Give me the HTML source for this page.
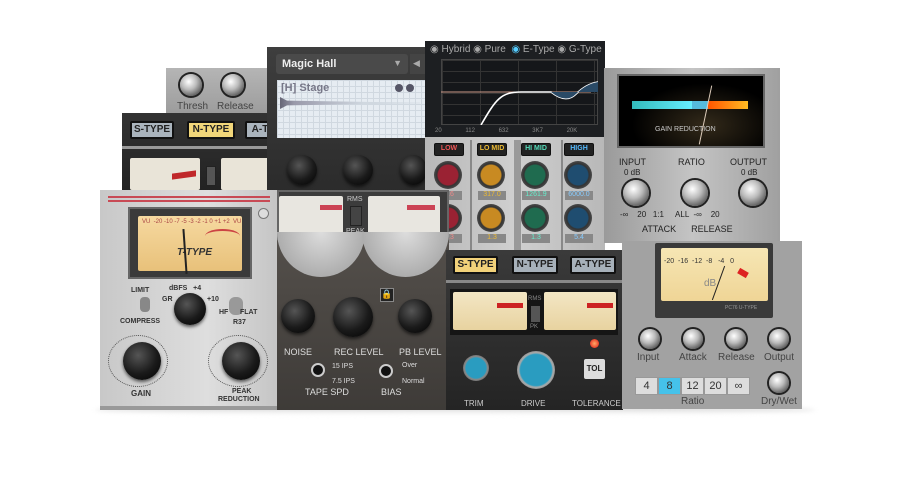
<!DOCTYPE html>
<html><head><meta charset="utf-8"><style>
*{margin:0;padding:0;box-sizing:border-box}
body{width:900px;height:500px;background:#fff;position:relative;overflow:hidden;font-family:"Liberation Sans",sans-serif}
.a{position:absolute}
.k{position:absolute;border-radius:50%}
.kb{background:radial-gradient(circle at 40% 35%,#555 0,#1a1a1a 55%,#000 100%);box-shadow:0 2px 3px rgba(0,0,0,.6)}
.ks{background:radial-gradient(circle at 40% 35%,#fff 0,#bbb 40%,#555 80%,#222 100%);box-shadow:0 0 0 2px #222}
.btn{position:absolute;font-size:10px;font-weight:bold;text-align:center;border:2px solid #111;border-radius:2px}
.lbl{position:absolute;font-size:9px;white-space:nowrap}
.vu{position:absolute;background:linear-gradient(#f3e6c4,#e8d3a0);border-radius:2px}
.ptr{position:absolute;width:2px;background:#111;transform-origin:bottom center}
</style></head><body>
<!-- shadow -->
<div class="a" style="left:95px;top:405px;width:720px;height:10px;background:linear-gradient(#ccc,#fff);border-radius:50%;filter:blur(2px)"></div>

<!-- back gray small panel -->
<div class="a" style="left:166px;top:68px;width:110px;height:46px;background:linear-gradient(#b5b5b5,#9c9c9c)"></div>
<div class="k ks" style="left:180px;top:74px;width:22px;height:22px"></div>
<div class="k ks" style="left:222px;top:74px;width:22px;height:22px"></div>
<div class="lbl" style="left:177px;top:101px;color:#444;font-size:10px">Thresh</div>
<div class="lbl" style="left:217px;top:101px;color:#444;font-size:10px">Release</div>

<!-- dark S-TYPE panel -->
<div class="a" style="left:122px;top:113px;width:150px;height:80px;background:linear-gradient(#333,#222)"></div>
<div class="btn" style="left:130px;top:121px;width:44px;height:18px;background:#aab4bd;color:#222;line-height:14px">S-TYPE</div>
<div class="btn" style="left:187px;top:121px;width:48px;height:18px;background:#f1d67a;color:#222;line-height:14px">N-TYPE</div>
<div class="btn" style="left:245px;top:121px;width:30px;height:18px;background:#aab4bd;color:#222;line-height:14px">A-T</div>
<div class="a" style="left:122px;top:146px;width:150px;height:3px;background:#999"></div>
<div class="vu" style="left:130px;top:158px;width:70px;height:32px;background:#e9e4d8"></div>
<div class="a" style="left:172px;top:172px;width:24px;height:6px;background:#c0282a;transform:skewY(-8deg)"></div>
<div class="a" style="left:206px;top:166px;width:10px;height:20px;background:#555;border:1px solid #222"></div>
<div class="vu" style="left:221px;top:158px;width:50px;height:32px;background:#e9e4d8"></div>

<!-- Magic Hall -->
<div class="a" style="left:267px;top:47px;width:160px;height:146px;background:linear-gradient(#3e3e3e,#2b2b2b)"></div>
<div class="a" style="left:276px;top:54px;width:132px;height:20px;background:#4a4a4a;border-radius:3px;color:#eee;font-size:11px;font-weight:bold;padding:4px 6px">Magic Hall<span style="float:right;color:#aaa;font-size:9px">▼</span></div>
<div class="a" style="left:410px;top:54px;width:17px;height:20px;background:#444;color:#aaa;font-size:9px;padding:4px 3px">◀</div>
<div class="a" style="left:277px;top:80px;width:150px;height:58px;background:linear-gradient(#e8eef5,#d2dbe5);background-image:linear-gradient(#d0d8e0 1px,transparent 1px),linear-gradient(90deg,#d0d8e0 1px,#e6ecf2 1px);background-size:6px 6px"></div>
<div class="lbl" style="left:281px;top:82px;color:#778;font-size:11px;font-weight:bold">[H] Stage</div>
<div class="a" style="left:395px;top:84px;width:8px;height:8px;border-radius:50%;background:#556"></div>
<div class="a" style="left:406px;top:84px;width:8px;height:8px;border-radius:50%;background:#556"></div>
<div class="a" style="left:280px;top:97px;width:140px;height:12px;background:linear-gradient(90deg,#667 0,#99a 10%,#d0d8e0 60%);clip-path:polygon(0 0,5% 30%,100% 48%,100% 52%,5% 70%,0 100%)"></div>
<div class="k kb" style="left:287px;top:155px;width:30px;height:30px"></div>
<div class="k kb" style="left:343px;top:155px;width:30px;height:30px"></div>
<div class="k kb" style="left:400px;top:155px;width:27px;height:30px"></div>

<!-- EQ -->
<div class="a" style="left:425px;top:41px;width:180px;height:98px;background:#1d1f22"></div>
<div class="lbl" style="left:430px;top:44px;color:#aaa;font-size:10px">◉ Hybrid ◉ Pure &nbsp;<span style="color:#5cf">◉</span> E-Type ◉ G-Type</div>
<div class="a" style="left:441px;top:59px;width:157px;height:66px;background:#15171a;background-image:linear-gradient(90deg,#333 1px,transparent 1px),linear-gradient(#333 1px,transparent 1px);background-size:38px 11px;border:1px solid #444"></div>
<svg class="a" style="left:441px;top:59px" width="157" height="66"><path d="M0 33 L150 33" stroke="#c98" stroke-width="1"/><path d="M40 66 C55 40 60 33 80 33 L110 33 Q125 45 135 35 Q145 25 157 23" stroke="#fff" stroke-width="1.6" fill="none"/><path d="M110 33 Q125 45 135 35 Q145 25 157 23 L157 33Z" fill="#2a4a66"/></svg>
<div class="lbl" style="left:435px;top:128px;color:#888;font-size:6px;word-spacing:22px">20 112 632 3K7 20K</div>
<div class="a" style="left:425px;top:137px;width:180px;height:113px;background:linear-gradient(90deg,#b8b8b8,#cfcfcf,#b8b8b8)"></div>
<div class="a" style="left:470px;top:140px;width:2px;height:110px;background:#888"></div>
<div class="a" style="left:514px;top:140px;width:7px;height:110px;background:#999"></div>
<div class="a" style="left:561px;top:140px;width:2px;height:110px;background:#888"></div>
<div class="btn" style="left:434px;top:143px;width:30px;height:13px;background:#222;color:#e55;font-size:7px;line-height:9px;border-width:1px">LOW</div>
<div class="btn" style="left:477px;top:143px;width:30px;height:13px;background:#222;color:#eb3;font-size:7px;line-height:9px;border-width:1px">LO MID</div>
<div class="btn" style="left:521px;top:143px;width:30px;height:13px;background:#222;color:#5db;font-size:7px;line-height:9px;border-width:1px">HI MID</div>
<div class="btn" style="left:564px;top:143px;width:30px;height:13px;background:#222;color:#5bf;font-size:7px;line-height:9px;border-width:1px">HIGH</div>
<div class="k" style="left:434px;top:161px;width:28px;height:28px;background:radial-gradient(#9a2233 50%,#333 56%,#777 100%)"></div>
<div class="k" style="left:477px;top:161px;width:28px;height:28px;background:radial-gradient(#c88a22 50%,#333 56%,#777 100%)"></div>
<div class="k" style="left:521px;top:161px;width:28px;height:28px;background:radial-gradient(#1f6b4f 50%,#333 56%,#777 100%)"></div>
<div class="k" style="left:564px;top:161px;width:28px;height:28px;background:radial-gradient(#1f4d70 50%,#333 56%,#777 100%)"></div>
<div class="a" style="left:436px;top:191px;width:26px;height:9px;background:#888;color:#e88;font-size:7px;text-align:center">9.6</div>
<div class="a" style="left:478px;top:191px;width:28px;height:9px;background:#888;color:#eb3;font-size:7px;text-align:center">317.0</div>
<div class="a" style="left:522px;top:191px;width:28px;height:9px;background:#888;color:#6ec;font-size:7px;text-align:center">1261.9</div>
<div class="a" style="left:565px;top:191px;width:28px;height:9px;background:#888;color:#8cf;font-size:7px;text-align:center">6000.0</div>
<div class="k" style="left:434px;top:204px;width:28px;height:28px;background:radial-gradient(#9a2233 50%,#333 56%,#777 100%)"></div>
<div class="k" style="left:477px;top:204px;width:28px;height:28px;background:radial-gradient(#c88a22 50%,#333 56%,#777 100%)"></div>
<div class="k" style="left:521px;top:204px;width:28px;height:28px;background:radial-gradient(#1f6b4f 50%,#333 56%,#777 100%)"></div>
<div class="k" style="left:564px;top:204px;width:28px;height:28px;background:radial-gradient(#1f4d70 50%,#333 56%,#777 100%)"></div>
<div class="a" style="left:436px;top:234px;width:26px;height:9px;background:#888;color:#e88;font-size:7px;text-align:center">1.3</div>
<div class="a" style="left:478px;top:234px;width:28px;height:9px;background:#888;color:#eb3;font-size:7px;text-align:center">1.3</div>
<div class="a" style="left:522px;top:234px;width:28px;height:9px;background:#888;color:#6ec;font-size:7px;text-align:center">1.3</div>
<div class="a" style="left:565px;top:234px;width:28px;height:9px;background:#888;color:#8cf;font-size:7px;text-align:center">5.4</div>

<!-- Right compressor -->
<div class="a" style="left:604px;top:68px;width:176px;height:175px;background:linear-gradient(90deg,#9a9a9a,#c4c4c4 50%,#a0a0a0)"></div>
<div class="a" style="left:617px;top:74px;width:148px;height:74px;background:radial-gradient(ellipse at 60% 70%,#332a1a,#000 60%);border:2px solid #666"></div>
<div class="a" style="left:632px;top:101px;width:60px;height:8px;background:linear-gradient(90deg,#3bb,#6ef)"></div>
<div class="a" style="left:708px;top:101px;width:40px;height:8px;background:linear-gradient(90deg,#f50,#fb2)"></div>
<div class="a" style="left:692px;top:101px;width:16px;height:8px;background:#5bd"></div>
<div class="lbl" style="left:655px;top:126px;color:#ccc;font-size:7px">GAIN REDUCTION</div>
<div class="a" style="left:705px;top:85px;width:1px;height:60px;background:#dcb;transform:rotate(12deg)"></div>
<div class="lbl" style="left:619px;top:157px;color:#222;font-size:9px">INPUT</div>
<div class="lbl" style="left:678px;top:157px;color:#222;font-size:9px">RATIO</div>
<div class="lbl" style="left:730px;top:157px;color:#222;font-size:9px">OUTPUT</div>
<div class="lbl" style="left:624px;top:168px;color:#222;font-size:8px">0 dB</div>
<div class="lbl" style="left:741px;top:168px;color:#222;font-size:8px">0 dB</div>
<div class="k ks" style="left:623px;top:180px;width:26px;height:26px"></div>
<div class="k ks" style="left:682px;top:180px;width:26px;height:26px"></div>
<div class="k ks" style="left:740px;top:180px;width:26px;height:26px"></div>
<div class="lbl" style="left:620px;top:210px;color:#222;font-size:8px">-∞ &nbsp;&nbsp;&nbsp;20 &nbsp;&nbsp;1:1 &nbsp;&nbsp;&nbsp;&nbsp;ALL &nbsp;-∞ &nbsp;&nbsp;&nbsp;20</div>
<div class="lbl" style="left:642px;top:224px;color:#222;font-size:9px">ATTACK &nbsp;&nbsp;&nbsp;&nbsp;&nbsp;RELEASE</div>

<!-- T-Type panel -->
<div class="a" style="left:100px;top:190px;width:178px;height:220px;background:linear-gradient(90deg,#c8c8c8,#dedede 60%,#c5c5c5)"></div>
<div class="a" style="left:108px;top:196px;width:162px;height:2px;background:#c84a55"></div>
<div class="a" style="left:108px;top:200px;width:162px;height:2px;background:#c84a55"></div>
<div class="a" style="left:128px;top:207px;width:124px;height:72px;background:#3a3a3a;border:2px solid #666"></div>
<div class="vu" style="left:138px;top:216px;width:104px;height:55px;background:linear-gradient(#f6d9a0,#e8c17a)"></div>
<div class="lbl" style="left:142px;top:219px;color:#a44;font-size:6px">VU &nbsp;-20 -10 -7 -5 -3 -2 -1 0 +1 +2 &nbsp;VU</div>
<div class="a" style="left:205px;top:229px;width:35px;height:14px;border-top:2px solid #c44;border-radius:50% 50% 0 0"></div>
<div class="lbl" style="left:177px;top:247px;color:#333;font-size:10px;font-style:italic;font-weight:bold">T-TYPE</div>
<div class="a" style="left:184px;top:229px;width:2px;height:45px;background:#222;transform:rotate(-4deg)"></div>
<div class="k" style="left:258px;top:208px;width:11px;height:11px;border:1px solid #777;background:#ddd"></div>
<div class="lbl" style="left:131px;top:287px;font-size:7px;font-weight:bold;color:#333">LIMIT</div>
<div class="a" style="left:140px;top:297px;width:10px;height:15px;background:#888;border-radius:4px"></div>
<div class="lbl" style="left:120px;top:318px;font-size:7px;font-weight:bold;color:#333">COMPRESS</div>
<div class="lbl" style="left:169px;top:285px;font-size:7px;font-weight:bold;color:#333">dBFS &nbsp;&nbsp;+4</div>
<div class="lbl" style="left:162px;top:296px;font-size:7px;font-weight:bold;color:#333">GR</div>
<div class="lbl" style="left:207px;top:296px;font-size:7px;font-weight:bold;color:#333">+10</div>
<div class="k kb" style="left:174px;top:293px;width:32px;height:32px"></div>
<div class="k" style="left:229px;top:297px;width:14px;height:18px;background:#999;border-radius:6px"></div>
<div class="lbl" style="left:219px;top:309px;font-size:7px;font-weight:bold;color:#333">HF &nbsp;&nbsp;&nbsp;&nbsp;&nbsp;FLAT</div>
<div class="lbl" style="left:233px;top:319px;font-size:7px;font-weight:bold;color:#333">R37</div>
<div class="k" style="left:108px;top:335px;width:60px;height:52px;border-radius:50%;border:1px dotted #555"></div>
<div class="k kb" style="left:123px;top:342px;width:38px;height:38px"></div>
<div class="lbl" style="left:131px;top:389px;font-size:8px;font-weight:bold;color:#333">GAIN</div>
<div class="k" style="left:208px;top:335px;width:60px;height:52px;border-radius:50%;border:1px dotted #555"></div>
<div class="k kb" style="left:222px;top:342px;width:38px;height:38px"></div>
<div class="lbl" style="left:218px;top:388px;font-size:7px;font-weight:bold;color:#333;text-align:center;line-height:8px">&nbsp;&nbsp;&nbsp;PEAK<br>REDUCTION</div>
<div class="a" style="left:100px;top:406px;width:178px;height:4px;background:#999"></div>

<!-- Tape panel -->
<div class="a" style="left:277px;top:190px;width:172px;height:220px;background:linear-gradient(#5a5550,#3e3b38)"></div>
<div class="a" style="left:277px;top:190px;width:172px;height:50px;background:#3c3c3c;border:2px solid #666"></div>
<div class="vu" style="left:279px;top:196px;width:64px;height:38px;background:#e8e6e0"></div>
<div class="a" style="left:320px;top:205px;width:22px;height:5px;background:#c45;"></div>
<div class="lbl" style="left:347px;top:196px;color:#ccc;font-size:7px">RMS</div>
<div class="a" style="left:350px;top:206px;width:12px;height:20px;background:#444;border:1px solid #222"></div>
<div class="lbl" style="left:346px;top:228px;color:#ccc;font-size:7px">PEAK</div>
<div class="vu" style="left:368px;top:196px;width:72px;height:38px;background:#e8e6e0"></div>
<div class="a" style="left:407px;top:205px;width:28px;height:5px;background:#c45"></div>
<div class="k" style="left:277px;top:232px;width:88px;height:45px;border-radius:0 0 50% 50%/0 0 100% 100%;background:radial-gradient(ellipse at 50% 0,#ddd,#999)"></div>
<div class="k" style="left:362px;top:232px;width:87px;height:45px;border-radius:0 0 50% 50%/0 0 100% 100%;background:radial-gradient(ellipse at 50% 0,#ddd,#999)"></div>
<div class="a" style="left:380px;top:288px;width:14px;height:14px;background:#222;border:1px solid #888;color:#ddd;font-size:9px;text-align:center">🔒</div>
<div class="k kb" style="left:281px;top:299px;width:34px;height:34px"></div>
<div class="k kb" style="left:333px;top:297px;width:40px;height:40px"></div>
<div class="k kb" style="left:398px;top:299px;width:34px;height:34px"></div>
<div class="lbl" style="left:284px;top:347px;color:#ddd;font-size:9px">NOISE</div>
<div class="lbl" style="left:334px;top:347px;color:#ddd;font-size:9px">REC LEVEL</div>
<div class="lbl" style="left:399px;top:347px;color:#ddd;font-size:9px">PB LEVEL</div>
<div class="k" style="left:311px;top:363px;width:14px;height:14px;background:#111;border:2px solid #ccc"></div>
<div class="lbl" style="left:332px;top:363px;color:#ddd;font-size:7px">15 IPS</div>
<div class="lbl" style="left:332px;top:378px;color:#ddd;font-size:7px">7.5 IPS</div>
<div class="lbl" style="left:305px;top:387px;color:#ddd;font-size:9px">TAPE SPD</div>
<div class="k" style="left:379px;top:364px;width:14px;height:14px;background:#111;border:2px solid #ccc"></div>
<div class="lbl" style="left:402px;top:362px;color:#ddd;font-size:7px">Over</div>
<div class="lbl" style="left:402px;top:378px;color:#ddd;font-size:7px">Normal</div>
<div class="lbl" style="left:381px;top:387px;color:#ddd;font-size:9px">BIAS</div>

<!-- S-TYPE bottom -->
<div class="a" style="left:446px;top:250px;width:177px;height:160px;background:linear-gradient(#3a3a3a,#242424)"></div>
<div class="btn" style="left:453px;top:256px;width:45px;height:18px;background:#f2d27a;color:#222;line-height:14px">S-TYPE</div>
<div class="btn" style="left:512px;top:256px;width:46px;height:18px;background:#a7b1ba;color:#222;line-height:14px">N-TYPE</div>
<div class="btn" style="left:570px;top:256px;width:46px;height:18px;background:#a7b1ba;color:#222;line-height:14px">A-TYPE</div>
<div class="a" style="left:446px;top:280px;width:177px;height:3px;background:#888"></div>
<div class="a" style="left:450px;top:289px;width:168px;height:46px;background:#151515"></div>
<div class="vu" style="left:453px;top:292px;width:74px;height:38px"></div>
<div class="a" style="left:497px;top:303px;width:26px;height:5px;background:#c22"></div>
<div class="a" style="left:487px;top:292px;width:1px;height:38px"></div>
<div class="lbl" style="left:528px;top:296px;color:#888;font-size:6px">RMS</div>
<div class="a" style="left:531px;top:306px;width:9px;height:16px;background:#555"></div>
<div class="lbl" style="left:530px;top:324px;color:#888;font-size:6px">PK</div>
<div class="vu" style="left:544px;top:292px;width:72px;height:38px"></div>
<div class="a" style="left:587px;top:303px;width:26px;height:5px;background:#c22"></div>
<div class="k" style="left:463px;top:355px;width:26px;height:26px;background:radial-gradient(#2a9cc0 55%,#888 62%,#333 100%)"></div>
<div class="k" style="left:517px;top:351px;width:38px;height:38px;background:radial-gradient(#2a9cc0 58%,#aaa 64%,#333 100%)"></div>
<div class="k" style="left:590px;top:339px;width:9px;height:9px;background:radial-gradient(#fa6,#d11)"></div>
<div class="a" style="left:584px;top:359px;width:21px;height:20px;background:#ddd;border-radius:2px;font-size:8px;font-weight:bold;text-align:center;line-height:20px;color:#222">TOL</div>
<div class="lbl" style="left:464px;top:399px;color:#ccc;font-size:8px">TRIM</div>
<div class="lbl" style="left:521px;top:399px;color:#ccc;font-size:8px">DRIVE</div>
<div class="lbl" style="left:572px;top:399px;color:#ccc;font-size:8px">TOLERANCE</div>

<!-- PC76 -->
<div class="a" style="left:622px;top:241px;width:180px;height:168px;background:#a2a2a2"></div>
<div class="a" style="left:655px;top:243px;width:118px;height:75px;background:#3a3a3a;border-radius:2px"></div>
<div class="vu" style="left:661px;top:248px;width:107px;height:53px;background:linear-gradient(#f6e6b4,#efd596)"></div>
<div class="lbl" style="left:664px;top:258px;color:#333;font-size:7px">-20 &nbsp;-16 &nbsp;-12 &nbsp;-8 &nbsp;&nbsp;-4 &nbsp;&nbsp;0</div>
<div class="lbl" style="left:704px;top:278px;color:#888;font-size:10px">dB</div>
<div class="a" style="left:738px;top:270px;width:10px;height:6px;background:#d22;transform:rotate(30deg)"></div>
<div class="a" style="left:718px;top:265px;width:1px;height:36px;background:#222;transform:rotate(20deg)"></div>
<div class="lbl" style="left:725px;top:305px;color:#999;font-size:5px">PC76 U-TYPE</div>
<div class="k ks" style="left:640px;top:329px;width:20px;height:20px"></div>
<div class="k ks" style="left:683px;top:329px;width:20px;height:20px"></div>
<div class="k ks" style="left:726px;top:329px;width:20px;height:20px"></div>
<div class="k ks" style="left:769px;top:329px;width:20px;height:20px"></div>
<div class="lbl" style="left:637px;top:352px;color:#444;font-size:10px">Input</div>
<div class="lbl" style="left:679px;top:352px;color:#444;font-size:10px">Attack</div>
<div class="lbl" style="left:718px;top:352px;color:#444;font-size:10px">Release</div>
<div class="lbl" style="left:764px;top:352px;color:#444;font-size:10px">Output</div>
<div class="a" style="left:635px;top:377px;width:115px;height:18px;display:flex;font-size:11px;color:#333">
<div style="flex:1;background:#ddd;border:1px solid #999;text-align:center;line-height:16px">4</div>
<div style="flex:1;background:#45c2ea;border:1px solid #999;text-align:center;line-height:16px">8</div>
<div style="flex:1;background:#ddd;border:1px solid #999;text-align:center;line-height:16px">12</div>
<div style="flex:1;background:#ddd;border:1px solid #999;text-align:center;line-height:16px">20</div>
<div style="flex:1;background:#ddd;border:1px solid #999;text-align:center;line-height:16px">∞</div></div>
<div class="lbl" style="left:681px;top:396px;color:#444;font-size:10px">Ratio</div>
<div class="k ks" style="left:769px;top:373px;width:20px;height:20px"></div>
<div class="lbl" style="left:761px;top:396px;color:#444;font-size:10px">Dry/Wet</div>
</body></html>
